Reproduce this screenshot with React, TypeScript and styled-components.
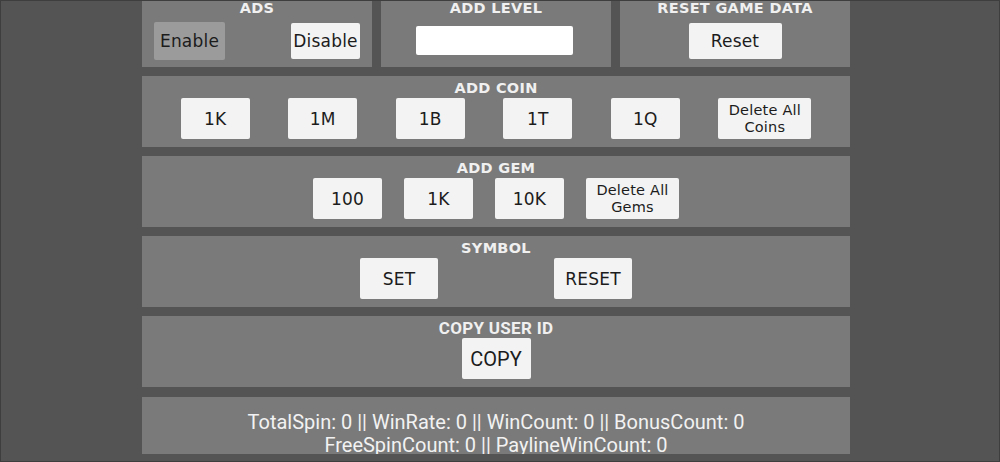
import styled, { createGlobalStyle } from "styled-components";

const GlobalStyle = createGlobalStyle`
    html, body {
        margin: 0;
        padding: 0;
        background: #545454;
    }
    * {
        box-sizing: border-box;
    }
`;

const Screen = styled.div`
    width: 1000px;
    height: 462px;
    background-color: #545454;
    border: 1px solid #3e3e3e;
    overflow: hidden;
    font-family: "DejaVu Sans", sans-serif;
`;

const Column = styled.div`
    width: 708px;
    margin: -5px 0 0 141px;
    display: flex;
    flex-direction: column;
    gap: 9px;
`;

const TopRow = styled.div`
    display: grid;
    grid-template-columns: repeat(3, 1fr);
    gap: 9px;
`;

const Panel = styled.div`
    height: 71px;
    background-color: #7a7a7a;
    display: flex;
    flex-direction: column;
    align-items: center;
    padding-top: 4px;
`;

const StatsPanel = styled.div`
    height: 57px;
    margin-top: 1px;
    background-color: #7a7a7a;
    overflow: hidden;
    padding-top: 14px;
    text-align: center;
    font-family: Roboto, "Liberation Sans", sans-serif;
    font-size: 20px;
    line-height: 23px;
    color: #f2f2f2;
`;

const Title = styled.div<{ $condensed?: boolean }>`
    height: 16px;
    line-height: 16px;
    font-family: ${props => props.$condensed ? "Roboto, \"Liberation Sans\", sans-serif" : "\"DejaVu Sans\", sans-serif"};
    font-size: ${props => props.$condensed ? "17px" : "14.5px"};
    font-weight: bold;
    color: #f0f0f0;
    letter-spacing: ${props => props.$condensed ? "0.3px" : "0.3px"};
`;

const Body = styled.div<{ $spread?: boolean }>`
    flex: 1;
    width: 100%;
    display: flex;
    align-items: center;
    justify-content: ${props => props.$spread ? "space-between" : "center"};
    padding: 0 12px 2px 12px;
`;

const ButtonRow = styled.div<{ $gap?: number; $even?: boolean }>`
    width: 100%;
    display: flex;
    justify-content: ${props => props.$even ? "space-evenly" : "center"};
    gap: ${props => props.$even ? 0 : props.$gap ?? 0}px;
    margin-top: 2px;
`;

const Button = styled.button<{ $w?: number; $h?: number; $off?: boolean; $small?: boolean; $roboto?: boolean }>`
    width: ${props => props.$w ?? 69}px;
    height: ${props => props.$h ?? 41}px;
    padding: 0;
    border: none;
    border-radius: 2px;
    background-color: ${props => props.$off ? "#9b9b9b" : "#f3f3f3"};
    color: #1c1c1c;
    font-family: ${props => props.$roboto ? "Roboto, \"Liberation Sans\", sans-serif" : "\"DejaVu Sans\", sans-serif"};
    font-size: ${props => props.$small ? "14.5px" : props.$roboto ? "20px" : "17px"};
    letter-spacing: ${props => props.$roboto ? "0" : "0.2px"};
    line-height: ${props => props.$small ? "17px" : "normal"};
    display: flex;
    align-items: center;
    justify-content: center;
    text-align: center;
`;

const LevelInput = styled.input`
    width: 157px;
    height: 29px;
    border: none;
    border-radius: 2px;
    background-color: #ffffff;
    margin-left: -4px;
    outline: none;
`;

function App() {
    return <>
        <GlobalStyle />
        <Screen>
            <Column>
                <TopRow>
                    <Panel>
                        <Title>ADS</Title>
                        <Body $spread>
                            <Button $w={71} $h={38} $off>Enable</Button>
                            <Button $w={69} $h={36}>Disable</Button>
                        </Body>
                    </Panel>
                    <Panel>
                        <Title>ADD LEVEL</Title>
                        <Body>
                            <LevelInput type="text" />
                        </Body>
                    </Panel>
                    <Panel>
                        <Title>RESET GAME DATA</Title>
                        <Body>
                            <Button $w={93} $h={36}>Reset</Button>
                        </Body>
                    </Panel>
                </TopRow>
                <Panel>
                    <Title>ADD COIN</Title>
                    <ButtonRow $even>
                        <Button>1K</Button>
                        <Button>1M</Button>
                        <Button>1B</Button>
                        <Button>1T</Button>
                        <Button>1Q</Button>
                        <Button $w={93} $small>Delete All<br />Coins</Button>
                    </ButtonRow>
                </Panel>
                <Panel>
                    <Title>ADD GEM</Title>
                    <ButtonRow $gap={22}>
                        <Button>100</Button>
                        <Button>1K</Button>
                        <Button>10K</Button>
                        <Button $w={93} $small>Delete All<br />Gems</Button>
                    </ButtonRow>
                </Panel>
                <Panel>
                    <Title>SYMBOL</Title>
                    <ButtonRow $gap={116}>
                        <Button $w={78}>SET</Button>
                        <Button $w={78}>RESET</Button>
                    </ButtonRow>
                </Panel>
                <Panel>
                    <Title $condensed>COPY USER ID</Title>
                    <ButtonRow>
                        <Button $w={69} $roboto>COPY</Button>
                    </ButtonRow>
                </Panel>
                <StatsPanel>
                    TotalSpin: 0 || WinRate: 0 || WinCount: 0 || BonusCount: 0<br />
                    FreeSpinCount: 0 || PaylineWinCount: 0
                </StatsPanel>
            </Column>
        </Screen>
    </>
}

export default App;
